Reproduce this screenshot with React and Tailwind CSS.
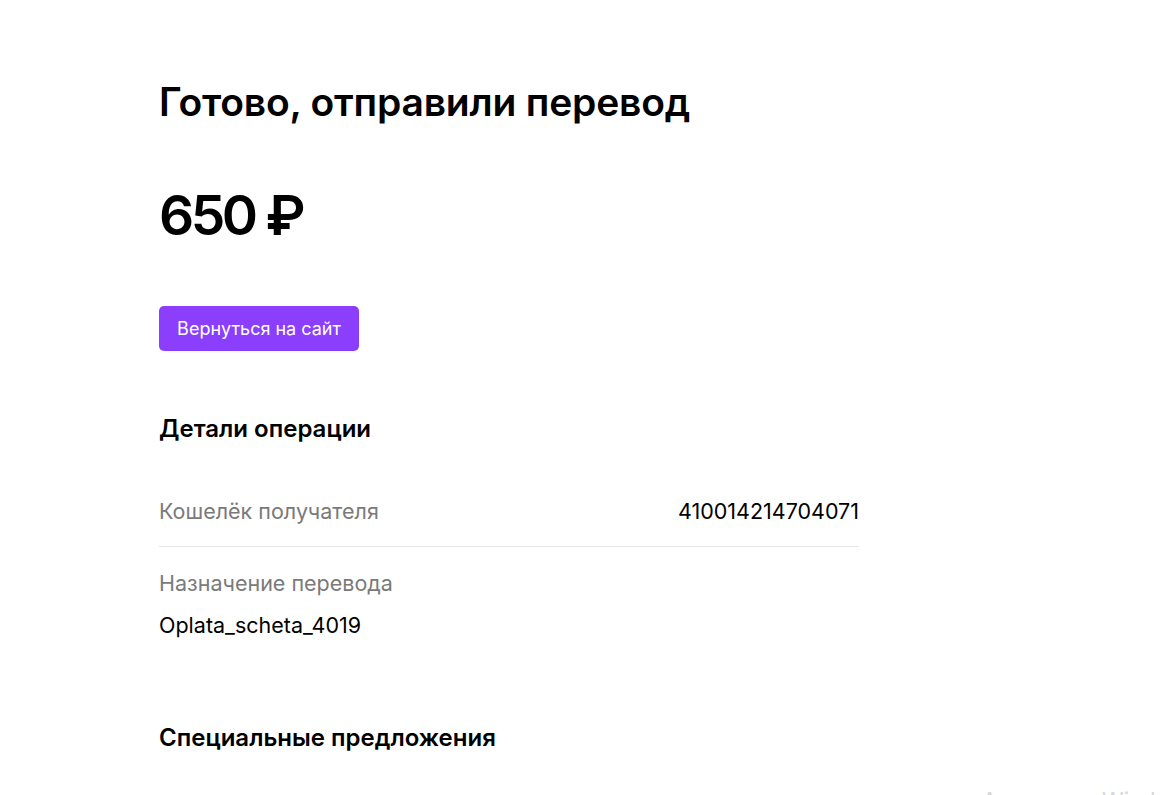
export default function App() {
  return (
    <div className="relative min-h-[795px] w-full overflow-hidden bg-white" style={{ fontFamily: '"Inter", "Noto Sans", sans-serif' }}>
      <div className="w-[700px] ml-[159px] pt-[77px]">
        <h1 className="text-[39px] leading-[50px] font-semibold text-black tracking-[-0.2px]">Готово, отправили перевод</h1>
        <div className="mt-[56px] text-[55px] leading-[64px] font-semibold text-black">
          <span className="tracking-[-3.5px]">650</span>
          <span className="ml-[11px]">₽</span>
        </div>
        <button className="mt-[59px] h-[45px] w-[200px] rounded-[5px] bg-[#8b3ffd] text-white text-[18px] leading-[45px]">Вернуться на сайт</button>
        <h2 className="mt-[63px] text-[24px] leading-[30px] font-semibold text-black">Детали операции</h2>
        <div className="mt-[52px] flex items-center justify-between pb-[20px] border-b border-[#e6e6e6]">
          <span className="text-[21.5px] leading-[30px] text-[#7a7a7a]">Кошелёк получателя</span>
          <span className="text-[21.5px] leading-[30px] text-black">410014214704071</span>
        </div>
        <div className="pt-[21px] text-[21.5px] leading-[30px] text-[#7a7a7a]">Назначение перевода</div>
        <div className="mt-[12px] text-[21.5px] leading-[30px] text-black">Oplata_scheta_4019</div>
        <h2 className="mt-[83px] text-[24px] leading-[30px] font-semibold text-black">Специальные предложения</h2>
      </div>
      <div className="absolute left-[982px] top-[785px] text-[22px] leading-[30px] text-[#d6d6d6] whitespace-nowrap">Активация Windows</div>
    </div>
  );
}
